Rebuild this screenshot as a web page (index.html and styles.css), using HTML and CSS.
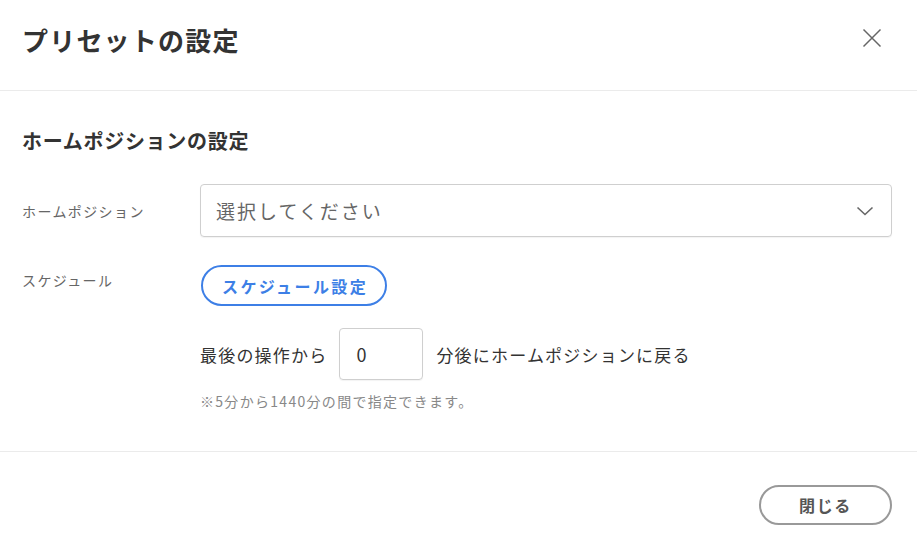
FILE: index.html
```html
<!DOCTYPE html>
<html lang="ja">
<head>
<meta charset="utf-8">
<link rel="stylesheet" href="styles.css">
</head>
<body>
<div class="dialog">
  <header class="dlg-head">
    <h1 class="dlg-title">プリセットの設定</h1>
    <button class="close-btn" aria-label="閉じる">
      <svg width="20" height="20" viewBox="0 0 20 20"><path d="M1.5 1.5 L18.5 18.5 M18.5 1.5 L1.5 18.5" stroke="#666" stroke-width="1.5" fill="none"/></svg>
    </button>
  </header>
  <section class="dlg-body">
    <h2 class="sec-title">ホームポジションの設定</h2>
    <div class="row row-center">
      <div class="label">ホームポジション</div>
      <div class="field">
        <div class="select">
          <span class="placeholder">選択してください</span>
          <svg class="chev" width="18" height="10" viewBox="0 0 18 10"><path d="M1.5 1.5 L9 8.5 L16.5 1.5" stroke="#666" stroke-width="1.6" fill="none"/></svg>
        </div>
      </div>
    </div>
    <div class="row row-top">
      <div class="label label-sched">スケジュール</div>
      <div class="field">
        <button class="sched-btn">スケジュール設定</button>
        <div class="inline-line">
          <span>最後の操作から</span>
          <div class="num-input">0</div>
          <span>分後にホームポジションに戻る</span>
        </div>
        <p class="note">※5分から1440分の間で指定できます。</p>
      </div>
    </div>
  </section>
  <footer class="dlg-foot">
    <button class="btn-close">閉じる</button>
  </footer>
</div>
</body>
</html>
```
FILE: styles.css
```css
* { box-sizing: border-box; }
html, body { margin: 0; padding: 0; background: #fff; }
body {
  width: 917px;
  height: 535px;
  overflow: hidden;
  font-family: "Noto Sans CJK JP", "Noto Sans", sans-serif;
  color: #333;
}
.dialog { display: flex; flex-direction: column; }
.dlg-head {
  height: 91px;
  border-bottom: 1px solid #ebebeb;
  display: flex;
  align-items: flex-start;
  justify-content: space-between;
  padding: 24px 29px 0 22px;
}
.dlg-title {
  margin: 0;
  font-size: 26px;
  font-weight: 700;
  line-height: 32px;
  color: #333;
  letter-spacing: 1.2px;
}
.close-btn {
  border: 0;
  background: none;
  padding: 0;
  margin-top: -2px;
  width: 32px;
  height: 32px;
  display: flex;
  align-items: center;
  justify-content: center;
}
.dlg-body {
  height: 361px;
  border-bottom: 1px solid #ebebeb;
  padding: 30px 25px 0 22px;
}
.sec-title {
  margin: 0 0 23px;
  font-size: 20px;
  font-weight: 700;
  line-height: 40px;
  color: #333;
  letter-spacing: 0.7px;
}
.row { display: flex; }
.row-center { align-items: center; }
.row-top { align-items: flex-start; margin-top: 28px; }
.label {
  width: 178px;
  flex: none;
  font-size: 14px;
  letter-spacing: 1.4px;
  color: #666;
}
.label-sched { padding-top: 5px; }
.field { flex: 1; }
.select {
  height: 53px;
  border: 1px solid #cfcfcf;
  border-radius: 4px;
  display: flex;
  align-items: center;
  justify-content: space-between;
  padding: 0 17px 0 15px;
  box-shadow: 0 1px 1px rgba(0,0,0,0.05);
}
.placeholder { font-size: 19px; letter-spacing: 2px; color: #666; }
.sched-btn {
  display: block;
  height: 41px;
  padding: 0 17px 0 19px;
  margin-left: 1px;
  border: 2px solid #3d7fe6;
  border-radius: 21px;
  background: #fff;
  color: #3d7fe6;
  font-family: inherit;
  font-size: 16px;
  letter-spacing: 2.4px;
  font-weight: 700;
}
.inline-line {
  display: flex;
  align-items: center;
  margin-top: 22px;
  font-size: 17px;
  letter-spacing: 1.2px;
  color: #333;
}
.num-input {
  width: 84px;
  height: 52px;
  margin: 0 13px 0 12px;
  border: 1px solid #cfcfcf;
  border-radius: 4px;
  display: flex;
  align-items: center;
  padding-left: 16px;
  font-size: 18px;
  color: #333;
  box-shadow: 0 1px 1px rgba(0,0,0,0.05);
}
.note {
  margin: 11px 0 0;
  font-size: 14px;
  letter-spacing: 1.3px;
  color: #888;
}
.dlg-foot {
  display: flex;
  justify-content: flex-end;
  padding: 33px 25px 0 0;
}
.btn-close {
  width: 133px;
  height: 40px;
  border: 2px solid #999;
  border-radius: 20px;
  background: #fff;
  color: #555;
  font-family: inherit;
  font-size: 16px;
  letter-spacing: 1.6px;
  font-weight: 700;
}
```
